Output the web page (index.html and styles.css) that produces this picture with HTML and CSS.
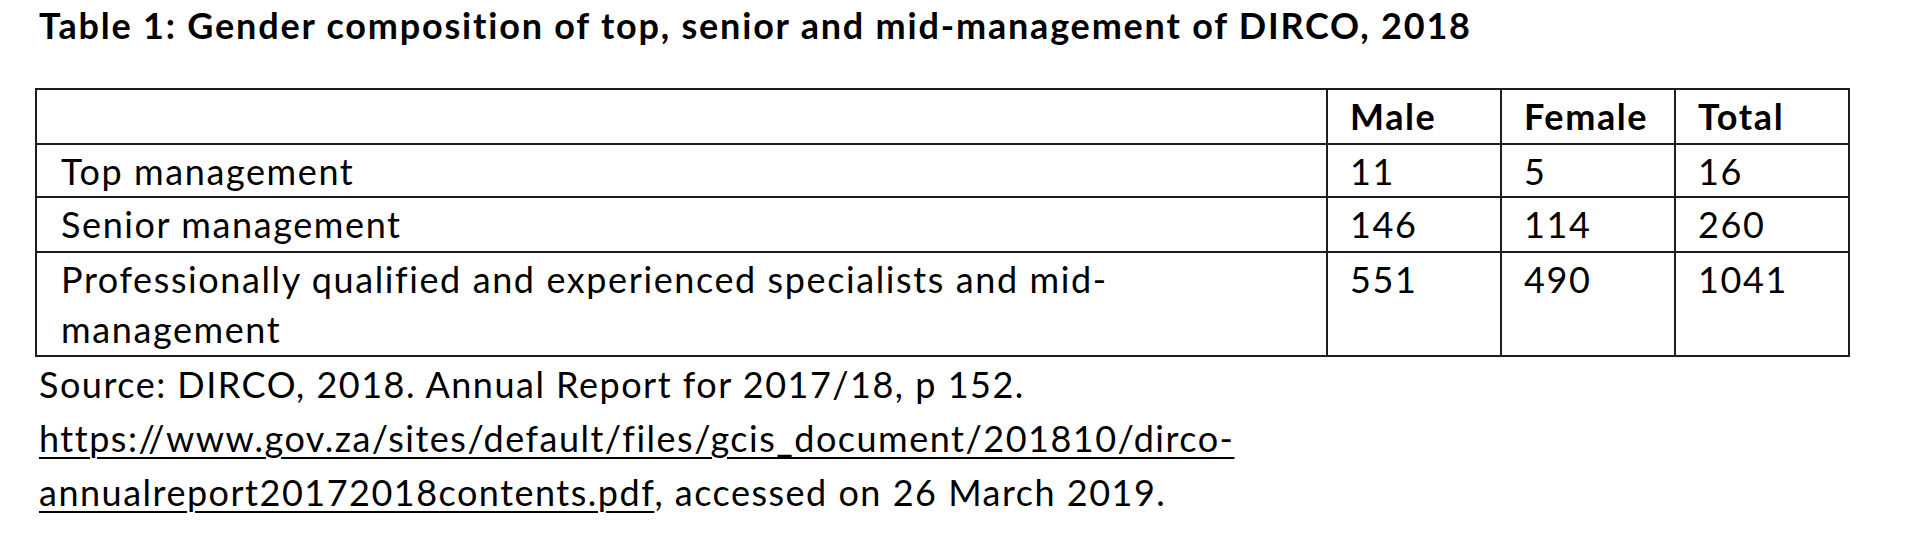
FILE: index.html
```html
<!DOCTYPE html>
<html lang="en">
<head>
<meta charset="utf-8">
<title>Table 1: Gender composition of DIRCO management, 2018</title>
<link rel="stylesheet" href="styles.css">
</head>
<body>
<div class="page">
  <h1 class="title">Table 1: Gender composition of top, senior and mid-management of DIRCO, 2018</h1>
  <table class="data">
    <colgroup>
      <col class="c-label">
      <col class="c-num">
      <col class="c-num">
      <col class="c-num">
    </colgroup>
    <thead>
      <tr class="r-head">
        <th class="label"></th>
        <th>Male</th>
        <th>Female</th>
        <th>Total</th>
      </tr>
    </thead>
    <tbody>
      <tr class="r-1">
        <td class="label">Top management</td>
        <td>11</td>
        <td>5</td>
        <td>16</td>
      </tr>
      <tr class="r-2">
        <td class="label">Senior management</td>
        <td>146</td>
        <td>114</td>
        <td>260</td>
      </tr>
      <tr class="r-3">
        <td class="label">Professionally qualified and experienced specialists and mid-<br>management</td>
        <td>551</td>
        <td>490</td>
        <td>1041</td>
      </tr>
    </tbody>
  </table>
  <p class="source">Source: DIRCO, 2018. Annual Report for 2017/18, p 152.<br><a class="link" href="#">https://www.gov.za/sites/default/files/gcis_document/201810/dirco-<br>annualreport20172018contents.pdf</a>, accessed on 26 March 2019.</p>
</div>
</body>
</html>
```

FILE: styles.css
```css
html, body {
  margin: 0;
  padding: 0;
  background: #ffffff;
}

body {
  font-family: Lato, "Open Sans", "Liberation Sans", sans-serif;
  color: #000000;
}

.page {
  padding-left: 35px;
}

.title {
  margin: 2px 0 0 0;
  padding-left: 4px;
  font-size: 36px;
  font-weight: 700;
  line-height: 46px;
  letter-spacing: 1.8px;
}

.data {
  margin-top: 40px;
  border-collapse: collapse;
  table-layout: fixed;
  width: 1813px;
  font-size: 36px;
  letter-spacing: 1.6px;
}

.c-label { width: 1291px; }
.c-num { width: 174px; }

.data th,
.data td {
  border: 2px solid #1e1e1e;
  padding: 1px 4px 0 22px;
  line-height: 50px;
  text-align: left;
  vertical-align: top;
}

.data th {
  font-weight: 700;
}

.data .label {
  padding-left: 24px;
}

.r-head th { padding-bottom: 2px; }
.r-1 td { padding-bottom: 0; }
.r-2 td { padding-bottom: 2px; }
.r-3 td { padding-bottom: 1px; }

.source {
  margin: 0;
  padding-left: 4px;
  font-size: 36px;
  line-height: 54px;
  letter-spacing: 1.5px;
}

.link {
  color: #000000;
  text-decoration: underline;
  text-decoration-thickness: 2px;
  text-underline-offset: 5px;
}
```
